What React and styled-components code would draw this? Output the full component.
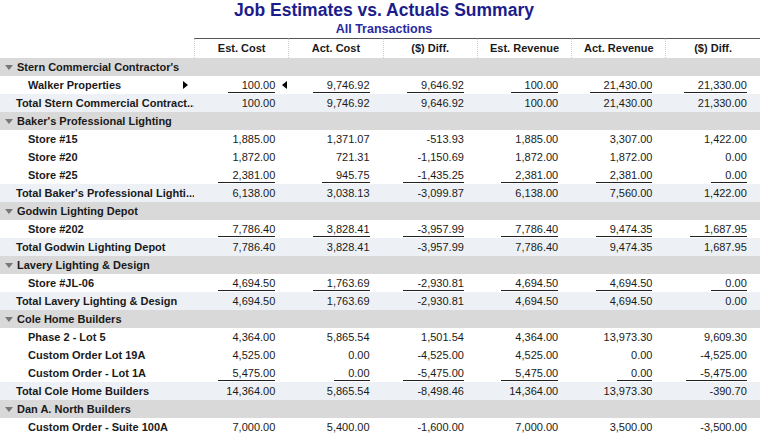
import styled, { createGlobalStyle } from "styled-components";

const Global = createGlobalStyle`
  body { margin: 0; background: #fff; font-family: "Liberation Sans", Arial, sans-serif; }
`;

const Page = styled.div`
  width: 768px;
  height: 436px;
  overflow: hidden;
  color: #1a1a1a;
`;

const Title = styled.h1`
  margin: 0;
  height: 21px;
  text-align: center;
  font-size: 17.5px;
  font-weight: bold;
  color: #1c1c8c;
  line-height: 21px;
`;

const Subtitle = styled.div`
  text-align: center;
  font-size: 12.5px;
  font-weight: bold;
  color: #2a2aa0;
  height: 17px;
  line-height: 16px;
`;

const Grid = styled.div`
  display: grid;
  grid-template-columns: 194px repeat(6, 94.3px);
  font-size: 11px;
`;

const HeadCell = styled.div`
  height: 19px;
  line-height: 19px;
  font-weight: bold;
  text-align: center;
  border-top: ${(p) => (p.$blank ? "none" : "1px solid #555")};
  border-left: ${(p) => (p.$blank ? "none" : "1px dotted #ccc")};
  background-clip: padding-box;
`;

const Row = styled.div`
  display: contents;
`;

const Cell = styled.div`
  height: 18px;
  line-height: 18px;
  background: ${(p) => (p.$kind === "group" ? "#d9d9d9" : p.$kind === "total" ? "#edf1f5" : "#fff")};
  text-align: right;
  padding-right: 13px;
  position: relative;
  white-space: nowrap;
  overflow: hidden;
`;

const Num = styled.span`
  display: inline-block;
  line-height: 14px;
  border-bottom: ${(p) => (p.$under ? "1px solid #222" : "1px solid transparent")};
  padding-left: ${(p) => (p.$under ? "14px" : "0")};
`;

const Label = styled(Cell)`
  text-align: left;
  font-weight: bold;
  padding-left: ${(p) => (p.$kind === "detail" ? "28px" : p.$kind === "group" ? "17px" : "16px")};
`;

const Tri = styled.span`
  position: absolute;
  left: 5px;
  top: 7px;
  border-left: 4px solid transparent;
  border-right: 4px solid transparent;
  border-top: 5px solid #777;
`;

const Marker = styled.span`
  position: absolute;
  top: 5px;
  ${(p) => (p.$dir === "right" ? "right: 6px; border-left: 5px solid #000;" : "right: 1px; border-right: 5px solid #000;")}
  border-top: 4px solid transparent;
  border-bottom: 4px solid transparent;
`;

const rows = [
  ["group", "Stern Commercial Contractor's"],
  ["detail", "Walker Properties", ["100.00", "9,746.92", "9,646.92", "100.00", "21,430.00", "21,330.00"], true, true],
  ["total", "Total Stern Commercial Contract...", ["100.00", "9,746.92", "9,646.92", "100.00", "21,430.00", "21,330.00"]],
  ["group", "Baker's Professional Lighting"],
  ["detail", "Store #15", ["1,885.00", "1,371.07", "-513.93", "1,885.00", "3,307.00", "1,422.00"]],
  ["detail", "Store #20", ["1,872.00", "721.31", "-1,150.69", "1,872.00", "1,872.00", "0.00"]],
  ["detail", "Store #25", ["2,381.00", "945.75", "-1,435.25", "2,381.00", "2,381.00", "0.00"], true],
  ["total", "Total Baker's Professional Lighti...", ["6,138.00", "3,038.13", "-3,099.87", "6,138.00", "7,560.00", "1,422.00"]],
  ["group", "Godwin Lighting Depot"],
  ["detail", "Store #202", ["7,786.40", "3,828.41", "-3,957.99", "7,786.40", "9,474.35", "1,687.95"], true],
  ["total", "Total Godwin Lighting Depot", ["7,786.40", "3,828.41", "-3,957.99", "7,786.40", "9,474.35", "1,687.95"]],
  ["group", "Lavery Lighting & Design"],
  ["detail", "Store #JL-06", ["4,694.50", "1,763.69", "-2,930.81", "4,694.50", "4,694.50", "0.00"], true],
  ["total", "Total Lavery Lighting & Design", ["4,694.50", "1,763.69", "-2,930.81", "4,694.50", "4,694.50", "0.00"]],
  ["group", "Cole Home Builders"],
  ["detail", "Phase 2 - Lot 5", ["4,364.00", "5,865.54", "1,501.54", "4,364.00", "13,973.30", "9,609.30"]],
  ["detail", "Custom Order Lot 19A", ["4,525.00", "0.00", "-4,525.00", "4,525.00", "0.00", "-4,525.00"]],
  ["detail", "Custom Order - Lot 1A", ["5,475.00", "0.00", "-5,475.00", "5,475.00", "0.00", "-5,475.00"], true],
  ["total", "Total Cole Home Builders", ["14,364.00", "5,865.54", "-8,498.46", "14,364.00", "13,973.30", "-390.70"]],
  ["group", "Dan A. North Builders"],
  ["detail", "Custom Order - Suite 100A", ["7,000.00", "5,400.00", "-1,600.00", "7,000.00", "3,500.00", "-3,500.00"]],
];

const heads = ["Est. Cost", "Act. Cost", "($) Diff.", "Est. Revenue", "Act. Revenue", "($) Diff."];

export default function App() {
  return (
    <Page>
      <Global />
      <Title>Job Estimates vs. Actuals Summary</Title>
      <Subtitle>All Transactions</Subtitle>
      <Grid>
        <HeadCell $blank />
        {heads.map((h, i) => (
          <HeadCell key={i}>{h}</HeadCell>
        ))}
        {rows.map(([kind, label, vals, under, sel], r) => (
          <Row key={r}>
            <Label $kind={kind}>
              {kind === "group" && <Tri />}
              {label}
              {sel && <Marker $dir="right" />}
            </Label>
            {Array.from({ length: 6 }).map((_, i) => (
              <Cell key={i} $kind={kind}>
                {vals && <Num $under={under}>{vals[i]}</Num>}
                {sel && i === 0 && <Marker $dir="left" />}
              </Cell>
            ))}
          </Row>
        ))}
      </Grid>
    </Page>
  );
}
